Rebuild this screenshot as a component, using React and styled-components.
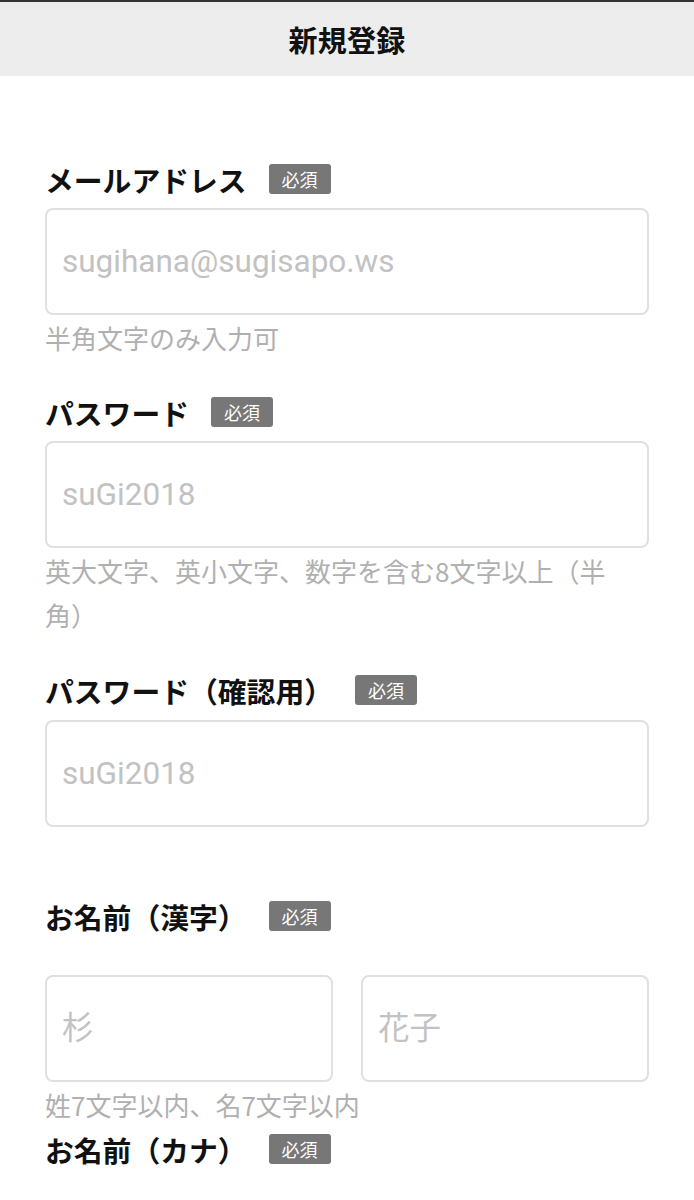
import styled, { createGlobalStyle } from "styled-components"

const GlobalStyle = createGlobalStyle`
  html, body {
    margin: 0;
    padding: 0;
    background: #ffffff;
  }
  body {
    font-family: "Noto Sans CJK JP", "Noto Sans", sans-serif;
    color: #111;
  }
`

const Page = styled.div`
  width: 694px;
  min-height: 1200px;
  background: #fff;
`

const Header = styled.header`
  height: 74px;
  border-top: 2px solid #333;
  background-color: #ededed;
  display: flex;
  align-items: center;
  justify-content: center;
`

const Title = styled.h1`
  margin: 0;
  font-size: 29px;
  font-weight: 700;
  color: #111;
  letter-spacing: 0.3px;
`

const Form = styled.form`
  padding: 81px 45px 0;
  display: flex;
  flex-direction: column;
`

const Field = styled.div`
  display: flex;
  flex-direction: column;
  margin-top: ${(p) => p.$top || 0}px;
`

const LabelRow = styled.div`
  height: 44px;
  display: flex;
  align-items: center;
  gap: 22px;
  margin-bottom: ${(p) => p.$gap || 7}px;
`

const Label = styled.label`
  font-size: 28.8px;
  font-weight: 700;
  color: #111;
`

const Badge = styled.span`
  height: 30px;
  padding: 0 13px;
  display: inline-flex;
  align-items: center;
  background-color: #777;
  color: #fff;
  font-size: 18px;
  border-radius: 3px;
`

const Inputs = styled.div`
  display: flex;
  gap: 28px;
`

const Input = styled.input`
  display: block;
  width: 100%;
  min-width: 0;
  height: 107px;
  box-sizing: border-box;
  border: 2px solid #e0e0e0;
  border-radius: 8px;
  padding: 0 15px;
  font-family: Roboto, "Noto Sans CJK JP", sans-serif;
  font-size: 31.5px;
  font-weight: 400;
  color: #333;
  background: #fff;
  outline: none;

  &::placeholder {
    color: #c2c2c2;
  }
`

const NameInput = styled(Input)`
  flex: 1;
`

const Hint = styled.p`
  margin: 0;
  max-width: 575px;
  font-size: 26px;
  line-height: 44px;
  color: #b0b0b0;
  padding-top: 1px;
`

const App = () => {
  return (
    <Page>
      <GlobalStyle />
      <Header>
        <Title>新規登録</Title>
      </Header>
      <Form>
        <Field>
          <LabelRow>
            <Label>メールアドレス</Label>
            <Badge>必須</Badge>
          </LabelRow>
          <Input placeholder="sugihana@sugisapo.ws" />
          <Hint>半角文字のみ入力可</Hint>
        </Field>

        <Field $top={30}>
          <LabelRow>
            <Label>パスワード</Label>
            <Badge>必須</Badge>
          </LabelRow>
          <Input type="text" placeholder="suGi2018" />
          <Hint>英大文字、英小文字、数字を含む8文字以上（半角）</Hint>
        </Field>

        <Field $top={31}>
          <LabelRow $gap={8}>
            <Label>パスワード（確認用）</Label>
            <Badge>必須</Badge>
          </LabelRow>
          <Input type="text" placeholder="suGi2018" />
        </Field>

        <Field $top={67}>
          <LabelRow $gap={37}>
            <Label>お名前（漢字）</Label>
            <Badge>必須</Badge>
          </LabelRow>
          <Inputs>
            <NameInput placeholder="杉" />
            <NameInput placeholder="花子" />
          </Inputs>
          <Hint>姓7文字以内、名7文字以内</Hint>
        </Field>

        <Field>
          <LabelRow>
            <Label>お名前（カナ）</Label>
            <Badge>必須</Badge>
          </LabelRow>
        </Field>
      </Form>
    </Page>
  )
}

export default App
